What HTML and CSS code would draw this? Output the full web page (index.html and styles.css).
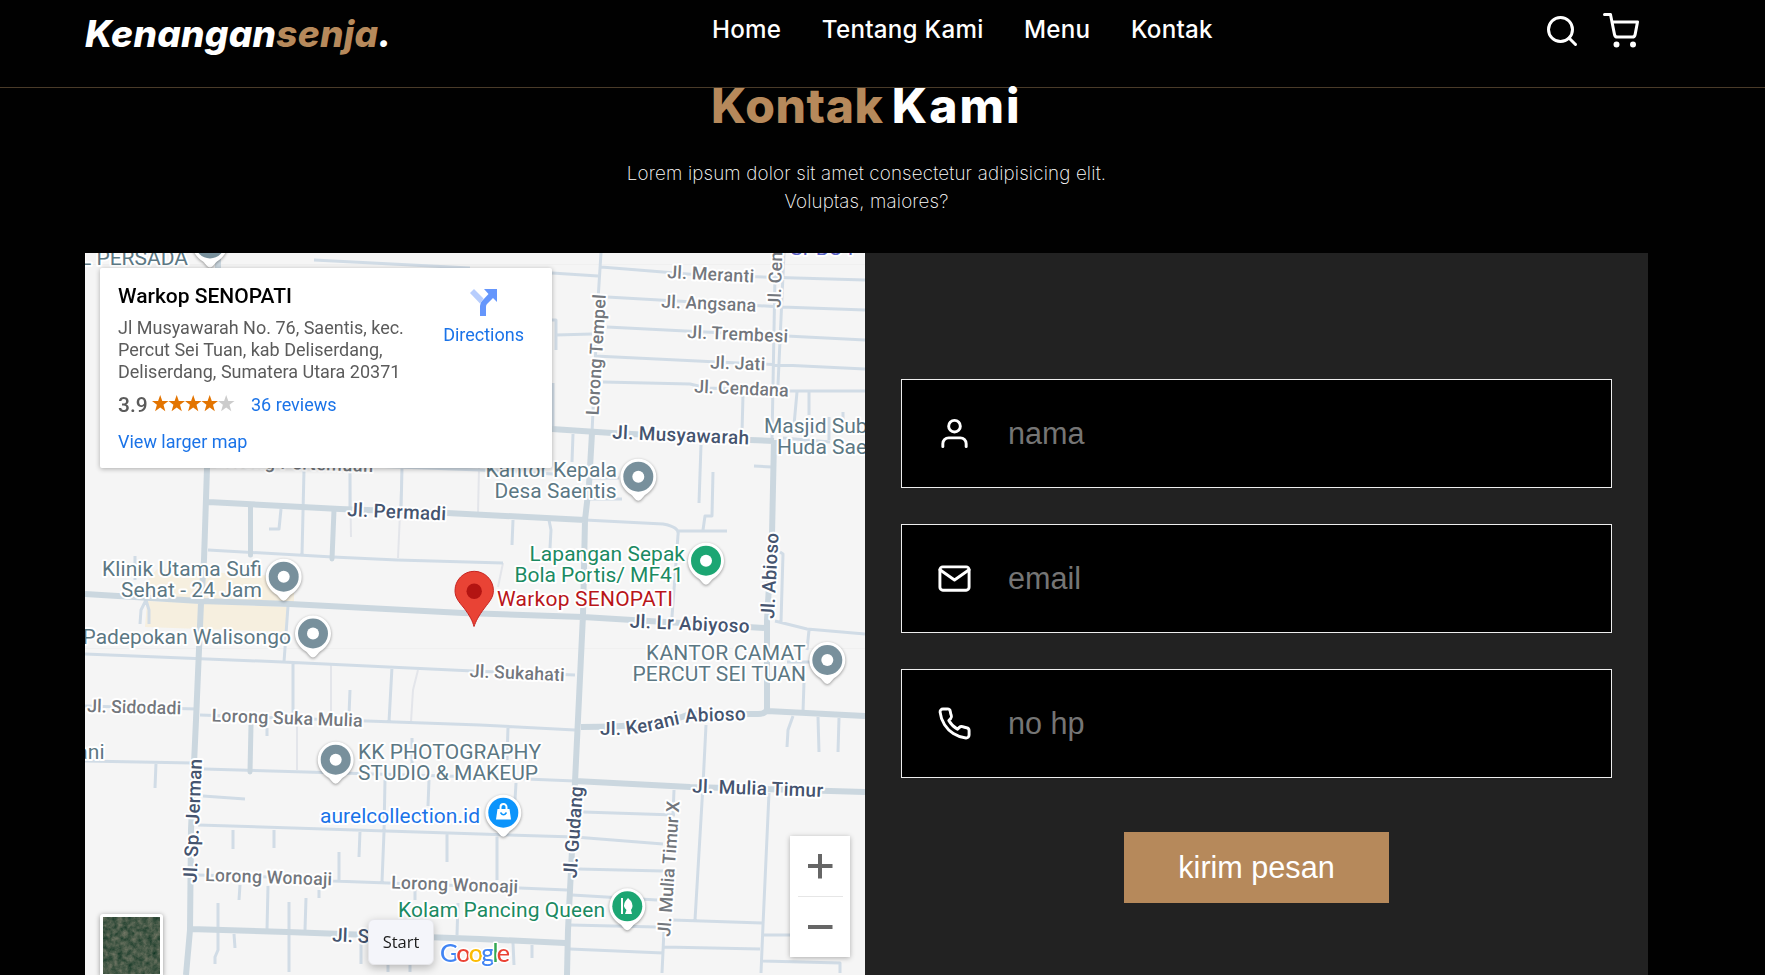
FILE: index.html
```html
<!DOCTYPE html>
<html lang="id">
<head>
<meta charset="utf-8">
<title>Kenangan Senja</title>
<link rel="stylesheet" href="styles.css">
</head>
<body>
<nav class="navbar">
  <a class="logo" href="#">Kenangan<span class="accent">senja</span>.</a>
  <div class="nav-links">
    <a href="#">Home</a>
    <a href="#">Tentang Kami</a>
    <a href="#">Menu</a>
    <a href="#">Kontak</a>
  </div>
  <div class="nav-extra">
    <svg class="icon" viewBox="0 0 24 24"><circle cx="11" cy="11" r="8"/><path d="M21 21l-4.35-4.35"/></svg>
    <svg class="icon" viewBox="0 0 24 24"><circle cx="9" cy="21" r="1"/><circle cx="20" cy="21" r="1"/><path d="M1 1h4l2.68 13.39a2 2 0 0 0 2 1.61h9.72a2 2 0 0 0 2-1.61L23 6H6"/></svg>
  </div>
</nav>

<section class="contact">
  <h2><span class="accent">Kontak</span> <span class="wide">Kami</span></h2>
  <p class="lead">Lorem ipsum dolor sit amet consectetur adipisicing elit.<br>Voluptas, maiores?</p>
  <div class="row">
    <div class="map">
      <svg class="map-canvas" viewBox="85 253 780 722">
        <defs>
          <g id="pin"><path class="pin-body" d="M0 24C-2 24-4 21-7 18C-13 14-18 8-18 0A18 18 0 0 1 18 0C18 8 13 14 7 18C4 21 2 24 0 24Z"/><circle r="15"/></g>
        </defs>
        <path class="area" d="M157 569L294 577V604L148 598V580ZM147 601L288 607L286 632L145 627Z"/>
        <path class="faint" d="M350 470L351 537M402 468L398 558M479 468L478 513M503 563L498 587M331 665V715M297 725V770M418 670L413 690L411 722"/>
        <path class="tile-edge" d="M85 264.500H865M85 648.500H865"/>
        <path class="minor" d="M601 267L700 275L865 280M607 297L782 307L865 310M607 327L865 340M595 356L865 369M603 382L690 384L707 388L788 391H865M775 275L772 440M784 253L778 385M743 395L742 433M797 392L794 425M809 392V415M829 417V440M843 412V425M783 438L830 442M552 273L598 276M552 320H556V350M556 335L592 334M553 383V429M573 434L572 462M701 445L699 503M713 472L712 516H705L703 530M754 466L772 467M589 478H619M589 499H622M585 520L663 524Q680 527 678 535L672 617M678 531H727M780 552L783 554L781 622M775 621L807 629L865 634M809 630L807 650M787 662H810M804 682L803 712M314 260L470 268M208 550L333 557L397 560L503 563M304 470L302 555M350 470L350 508M402 468L401 512M281 509L279 529H269M370 466L480 470L553 474M513 520L512 545M549 520L551 530L550 548M288 606L284 662M85 654L283 662L473 671L575 675M293 664V718M392 667L389 722M350 690L349 715M135 556V580M146 600L141 610L140 624M146 600L149 610V624M85 706L197 709M200 715L367 721L480 725L575 730M85 761L193 763M156 763L155 788M204 769L340 773L480 777L575 781M203 796L245 799M198 825L480 834L575 837L663 844M233 830V849M274 830V848M360 831L359 857M385 780L384 832L382 882M447 834V862M339 852V881M429 780L428 806M197 875L270 877L333 881L470 886L567 890M240 885L239 900M268 886L267 930M319 890V898M306 898L305 930M289 902V972M218 903V950L215 957V964M234 934L235 948M267 728V736M361 940V964M415 890V900M458 903L457 935M410 965V972M388 965V972M412 738V770M508 727L507 760M516 783L515 800M497 835V880M706 725L703 785L695 920M674 790L673 815M583 812L675 815M578 869L663 871M572 895L657 900M570 925L657 927M570 949L663 953M664 930L662 973M672 920L762 923M664 947L760 949M769 793L763 925L761 973M763 935H792M763 961L840 963V973M793 716L788 730L787 747M818 717L819 752M839 718L838 752M513 943L514 965M532 945V958M601 253L598 300L592 433"/>
        <path class="major" d="M218 253V268L207 468L204 560L201 603L196 720L191 830L190 930L186 975M592 433L589 485L585 520L583 615L577 740L575 782L572 850L568 930L567 975M774 440L772 535L767 620V708M767 706Q768 714 758 714L690 714Q660 727 581 727M767 711L865 716M552 429L612 433L750 440L774 441M208 502L340 509L447 513L585 520M85 594L200 601L290 604L463 613L583 617L765 628M190 929L287 932L480 939L565 943M575 781L690 787L865 792"/>
        <path class="mid" d="M250.500 506V555M334 510L332 559M251 725L250 772"/>

        <g class="street">
          <text transform="translate(667 278) rotate(3)" textLength="87">Jl. Meranti</text>
          <text transform="translate(661 307.500) rotate(2.500)" textLength="95">Jl. Angsana</text>
          <text transform="translate(687 338) rotate(2.500)" textLength="101">Jl. Trembesi</text>
          <text transform="translate(710 368.500) rotate(2)" textLength="55">Jl. Jati</text>
          <text transform="translate(694 392.500) rotate(2.500)" textLength="94.500">Jl. Cendana</text>
          <text transform="translate(598.500 415.500) rotate(-86.500)" textLength="121">Lorong Tempel</text>
          <text transform="translate(780.500 308) rotate(-88)" textLength="62">Jl. Cem</text>
          <text transform="translate(469.500 677) rotate(2.500)" textLength="95">Jl. Sukahati</text>
          <text transform="translate(87 712) rotate(1.500)" textLength="94">Jl. Sidodadi</text>
          <text transform="translate(211.500 721.500) rotate(2)" textLength="151">Lorong Suka Mulia</text>
          <text transform="translate(205 881) rotate(2)" textLength="127">Lorong Wonoaji</text>
          <text transform="translate(391 888.500) rotate(2)" textLength="127">Lorong Wonoaji</text>
          <text transform="translate(670 937) rotate(-86)" textLength="136">Jl. Mulia Timur X</text>
          <text transform="translate(216 466.500) rotate(2)" textLength="157">Lorong Pertemuan</text>
        </g>
        <g class="street main">
          <text transform="translate(612 438.500) rotate(2.500)" textLength="137">Jl. Musyawarah</text>
          <text transform="translate(347 516) rotate(2.500)" textLength="99">Jl. Permadi</text>
          <text transform="translate(629.500 627.500) rotate(2.500)" textLength="120">Jl. Lr Abiyoso</text>
          <text transform="translate(774 619) rotate(-87)" textLength="86">Jl. Abioso</text>
          <path id="kerani" class="guide" d="M600 734.500L628 734.500Q650 732 667 727Q690 721 700 721.500L755 720"/>
          <text textLength="147"><textPath href="#kerani" textLength="147">Jl. Kerani Abioso</textPath></text>
          <text transform="translate(692 792.500) rotate(2)" textLength="131">Jl. Mulia Timur</text>
          <text transform="translate(196.500 883) rotate(-87.500)" textLength="124">Jl. Sp. Jerman</text>
          <text transform="translate(576.500 878.500) rotate(-86)" textLength="92">Jl. Gudang</text>
          <text transform="translate(332 941.500) rotate(2)" textLength="37">Jl. S</text>
        </g>
        <g class="poi">
          <text x="188" y="264.500" text-anchor="end">L PERSADA</text>
          <text x="102" y="576" textLength="160">Klinik Utama Sufi</text>
          <text x="121" y="597" textLength="141">Sehat - 24 Jam</text>
          <text x="82.500" y="643.500" textLength="208.500">Padepokan Walisongo</text>
          <text x="485.500" y="477" textLength="131.500">Kantor Kepala</text>
          <text x="494.500" y="497.500" textLength="122">Desa Saentis</text>
          <text x="646" y="660" textLength="159.500">KANTOR CAMAT</text>
          <text x="632.500" y="681" textLength="173.500">PERCUT SEI TUAN</text>
          <text x="764" y="433">Masjid Sub</text>
          <text x="777" y="454">Huda Sae</text>
          <text x="358" y="759" textLength="183">KK PHOTOGRAPHY</text>
          <text x="358" y="780" textLength="180">STUDIO &amp; MAKEUP</text>
          <text x="104.500" y="759" text-anchor="end">ani</text>
          <text class="green" x="529.500" y="560.500" textLength="155.500">Lapangan Sepak</text>
          <text class="green" x="514.500" y="581.500" textLength="169">Bola Portis/ MF41</text>
          <text class="green" x="398" y="916.500" textLength="207">Kolam Pancing Queen</text>
          <text class="blue" x="320" y="823" textLength="160">aurelcollection.id</text>
          <text class="red" x="497" y="606" textLength="176">Warkop SENOPATI</text>
          <text class="violet" x="790" y="255">SPBU PT</text>
        </g>
        <g class="pins">
          <use href="#pin" x="210" y="243.500"/>
          <use href="#pin" x="283.700" y="576.700"/>
          <use href="#pin" x="313" y="633.500"/>
          <use href="#pin" x="638.300" y="476.700"/>
          <use href="#pin" x="827.300" y="660"/>
          <use href="#pin" x="335.700" y="759.700"/>
          <use href="#pin" class="pin-green" x="706" y="560.700"/>
          <use href="#pin" class="pin-green" x="627.300" y="906.300"/>
          <use href="#pin" class="pin-blue" x="503.300" y="812.700"/>
        </g>
        <g class="pin-holes">
          <circle cx="283.700" cy="576.700" r="6"/><circle cx="313" cy="633.500" r="6"/><circle cx="638.300" cy="476.700" r="6"/>
          <circle cx="827.300" cy="660" r="6"/><circle cx="335.700" cy="759.700" r="6"/><circle cx="706" cy="560.700" r="6"/>
          <path d="M497.500 809H509.500L511 819.500H496Z"/>
          <path d="M621 898H623V914H621ZM628 898L631 901Q634 906 631 910L632 914H625L626.500 910Q622 906 625.500 901Z"/>
        </g>
        <path class="bag-line" d="M500.500 809V807A3 3 0 0 1 506.500 807V809"/>
        <path class="bag-smile" d="M500.500 812.500Q503.500 817 506.500 812.500"/>
        <path class="target" d="M474 626.500C472.500 621 470 616 464 608C458 601 455 597 455 590.500A19.200 19.200 0 0 1 493.400 590.500C493.400 597 490 601 484.500 608C478.500 616 476 621 474 626.500Z"/>
        <circle class="target-dot" cx="474.200" cy="591.300" r="7.700"/>
        <text class="google" x="440" y="961.500" textLength="70"><tspan fill="#4285f4">G</tspan><tspan fill="#ea4335">o</tspan><tspan fill="#fbbc05">o</tspan><tspan fill="#4285f4">g</tspan><tspan fill="#34a853">l</tspan><tspan fill="#ea4335">e</tspan></text>
      </svg>

      <div class="place-card">
        <div class="place-info">
          <div class="place-name">Warkop SENOPATI</div>
          <div class="address">Jl Musyawarah No. 76, Saentis, kec.<br>Percut Sei Tuan, kab Deliserdang,<br>Deliserdang, Sumatera Utara 20371</div>
          <div class="rating">
            <span class="score">3.9</span>
            <svg class="stars" viewBox="0 0 83 17"><defs><path id="star" d="M8.200 0L10.300 5.900H16.500L11.500 9.800L13.300 16.200L8.200 12.500L3.100 16.200L4.900 9.800L0 5.900H6.100Z"/></defs><use href="#star"/><use href="#star" x="16.500"/><use href="#star" x="33"/><use href="#star" x="49.500"/><use href="#star" class="off" x="66"/></svg>
            <a href="#">36 reviews</a>
          </div>
          <a class="larger" href="#">View larger map</a>
        </div>
        <a class="directions" href="#">
          <svg viewBox="0 0 27 27"><path fill="#b7cdfd" d="M4 0L13.500 9.500L10 14.500L0 4Z"/><path fill="#6596fc" d="M14 0H27V13L23 9L17 15Q16 16 16 18V27H10V17Q10 14 12 12L18.500 5Z"/></svg>
          <span>Directions</span>
        </a>
      </div>

      <div class="satellite">
        <svg viewBox="0 0 57 57">
          <filter id="grass" x="0" y="0" width="100%" height="100%" color-interpolation-filters="sRGB"><feTurbulence type="fractalNoise" baseFrequency="0.2" numOctaves="4" seed="4"/><feColorMatrix values="0.450 0 0 0 0.050  0.300 0 0 0 0.200  0.300 0 0 0 0.130  0 0 0 0 1"/></filter>
          <rect width="57" height="57" filter="url(#grass)"/>
        </svg>
      </div>
      <div class="tooltip">Start</div>
      <div class="zoom">
        <svg viewBox="0 0 60 121"><path stroke="#666" stroke-width="4" d="M18 30H42.500M30 18V42.500M18 91H42.500"/><path stroke="#e6e6e6" d="M8 60.500H53"/></svg>
      </div>
    </div>

    <form class="form">
      <label class="field">
        <svg class="icon" viewBox="0 0 24 24"><path d="M20 21v-2a4 4 0 0 0-4-4H8a4 4 0 0 0-4 4v2"/><circle cx="12" cy="7" r="4"/></svg>
        <input type="text" placeholder="nama">
      </label>
      <label class="field">
        <svg class="icon" viewBox="0 0 24 24"><path d="M4 4h16c1.100 0 2 .9 2 2v12c0 1.100-.9 2-2 2H4c-1.100 0-2-.9-2-2V6c0-1.100.9-2 2-2z"/><path d="M22 6l-10 7L2 6"/></svg>
        <input type="text" placeholder="email">
      </label>
      <label class="field">
        <svg class="icon" viewBox="0 0 24 24"><path d="M22 16.920v3a2 2 0 0 1-2.180 2 19.790 19.790 0 0 1-8.630-3.070 19.500 19.500 0 0 1-6-6 19.790 19.790 0 0 1-3.070-8.670A2 2 0 0 1 4.110 2h3a2 2 0 0 1 2 1.720 12.840 12.840 0 0 0 .7 2.810 2 2 0 0 1-.45 2.110L8.090 9.910a16 16 0 0 0 6 6l1.270-1.270a2 2 0 0 1 2.110-.45 12.840 12.840 0 0 0 2.810.7A2 2 0 0 1 22 16.920z"/></svg>
        <input type="text" placeholder="no hp">
      </label>
      <button class="send" type="button">kirim pesan</button>
    </form>
  </div>
</section>
</body>
</html>
```
FILE: styles.css
```css
* { box-sizing: border-box; }

body {
  margin: 0;
  height: 975px;
  overflow: hidden;
  background: #010101;
  color: #fff;
  font-family: Inter, "Open Sans", sans-serif;
}

a { color: inherit; text-decoration: none; }
.accent { color: #b6895b; }

.icon {
  fill: none;
  stroke: #fff;
  stroke-width: 2;
  stroke-linecap: round;
  stroke-linejoin: round;
}

.navbar {
  display: grid;
  grid-template-columns: 627px 1fr auto;
  height: 88px;
  padding: 0 126px 0 85px;
  border-bottom: 1px solid #4a3b29;
}

.logo { padding-top: 13px; font-size: 37px; line-height: 42px; font-weight: 800; font-style: italic; letter-spacing: .25px; }

.nav-links { display: flex; gap: 40.5px; padding-top: 15px; font-size: 24.2px; line-height: 30px; font-weight: 500; letter-spacing: .25px; }

.nav-extra { display: flex; gap: 23px; padding-top: 13px; }
.nav-extra .icon { width: 36px; height: 36px; }

.contact { padding: 0 117px 0 85px; }

.contact h2 {
  margin: -6px 0 0;
  padding-left: 626px;
  font-size: 48px;
  line-height: 48px;
  font-weight: 800;
  letter-spacing: .6px;
  word-spacing: -3px;
  white-space: nowrap;
}
.contact .wide { letter-spacing: 2px; }

.lead {
  margin: 30px 0 0;
  width: 1563px;
  height: 93px;
  text-align: center;
  font-size: 18.8px;
  line-height: 28px;
  font-weight: 200;
  letter-spacing: .16px;
}

.row { display: grid; grid-template-columns: 780px 783px; height: 722px; }

.map { position: relative; overflow: hidden; background: #f5f5f5; font-family: Roboto, sans-serif; }
.map-canvas { display: block; width: 780px; height: 722px; }
.area { fill: #f6efdf; }
.minor, .major, .mid, .faint, .tile-edge { fill: none; stroke-linejoin: round; }
.minor { stroke: #d1dce6; stroke-width: 3; }
.major { stroke: #cbd7df; stroke-width: 6; }
.mid { stroke: #cbd7df; stroke-width: 5; stroke-linecap: round; }
.faint { stroke: #e3e5ea; stroke-width: 2; }
.tile-edge { stroke: #f0f0f0; stroke-width: 1; }
.guide { fill: none; }
.map-canvas text { paint-order: stroke; stroke: #fff; stroke-width: 4px; stroke-linejoin: round; }
.street { font-size: 18px; font-weight: 500; fill: #73777d; }
.main { font-size: 19px; fill: #45546f; }
.poi { font-size: 21px; fill: #5c7884; }
.poi .green { fill: #1b8a62; }
.poi .blue { fill: #1a73e8; }
.poi .red { fill: #b9151a; }
.poi .violet { fill: #5b62c4; }
.pins { fill: #78909c; filter: drop-shadow(0 1px 1.5px rgba(0, 0, 0, .4)); }
.pin-body { fill: #fff; }
.pin-green { fill: #1ca673; }
.pin-blue { fill: #0c94fb; }
.pin-holes { fill: #fff; }
.bag-line { fill: none; stroke: #fff; stroke-width: 2; }
.bag-smile { fill: none; stroke: #0c94fb; stroke-width: 1.5; }
.target { fill: #e94335; stroke: #c5221f; stroke-width: 1; }
.target-dot { fill: #b31412; }
.map-canvas .google { font: 500 25px Lato, sans-serif; stroke-width: 3px; }

.place-card {
  position: absolute;
  left: 15px;
  top: 15px;
  display: flex;
  justify-content: space-between;
  width: 452px;
  height: 200px;
  padding: 14px 28px 0 18px;
  border-radius: 2px;
  background: #fff;
  box-shadow: 0 1px 5px rgba(0, 0, 0, .3);
  color: #5b5b5b;
  font-size: 18px;
  line-height: 22px;
  white-space: nowrap;
}
.place-card a { color: #1a73e8; }
.place-name { color: #000; font-size: 21px; line-height: 28px; font-weight: 500; }
.address { margin-top: 7px; }
.rating { display: flex; align-items: center; height: 22px; margin-top: 11px; }
.score { width: 34px; margin-top: -1px; font-size: 21px; font-weight: 500; }
.stars { width: 83px; height: 17px; margin: -4px 16px 0 0; fill: #e37400; }
.stars .off { fill: #ccc; }
.larger { display: block; margin-top: 15px; }
.directions { display: flex; flex-direction: column; align-items: center; gap: 8px; padding-top: 7px; }
.directions svg { width: 27px; height: 27px; }

.satellite {
  position: absolute;
  left: 15px;
  top: 661px;
  width: 63px;
  height: 63px;
  padding: 3px;
  border-radius: 3px;
  background: #fff;
  box-shadow: 0 1px 5px rgba(0, 0, 0, .4);
}
.satellite svg { display: block; width: 57px; height: 57px; }

.tooltip {
  position: absolute;
  left: 283px;
  top: 666px;
  width: 66px;
  height: 46px;
  border: 1px solid #e6e6ea;
  border-radius: 6px;
  background: #f4f5fa;
  box-shadow: 0 3px 8px rgba(0, 0, 0, .25);
  color: #1c1c1c;
  font: 16.5px/43px "Open Sans", sans-serif;
  text-align: center;
}

.zoom {
  position: absolute;
  left: 705px;
  top: 583px;
  width: 60px;
  height: 121px;
  background: #fff;
  box-shadow: 0 1px 5px rgba(0, 0, 0, .3);
}
.zoom svg { display: block; }

.form {
  display: flex;
  flex-direction: column;
  align-items: center;
  gap: 36px;
  padding: 126px 36px 0;
  background: #222;
}
.field {
  display: flex;
  align-items: center;
  width: 711px;
  height: 109px;
  padding-left: 35px;
  border: 1px solid #eee;
  background: #000;
}
.field .icon { width: 35px; height: 35px; flex: none; }
.field input {
  flex: 1;
  margin-left: 36px;
  padding: 0;
  border: 0;
  outline: 0;
  background: transparent;
  color: #fff;
  font: 30.6px "Liberation Sans", Arial, sans-serif;
}
.field input::placeholder { color: #757575; }
.send {
  width: 265px;
  height: 71px;
  margin-top: 18px;
  padding: 0;
  border: 0;
  background: #b6895b;
  color: #fff;
  font: 30.6px "Liberation Sans", Arial, sans-serif;
}
```
